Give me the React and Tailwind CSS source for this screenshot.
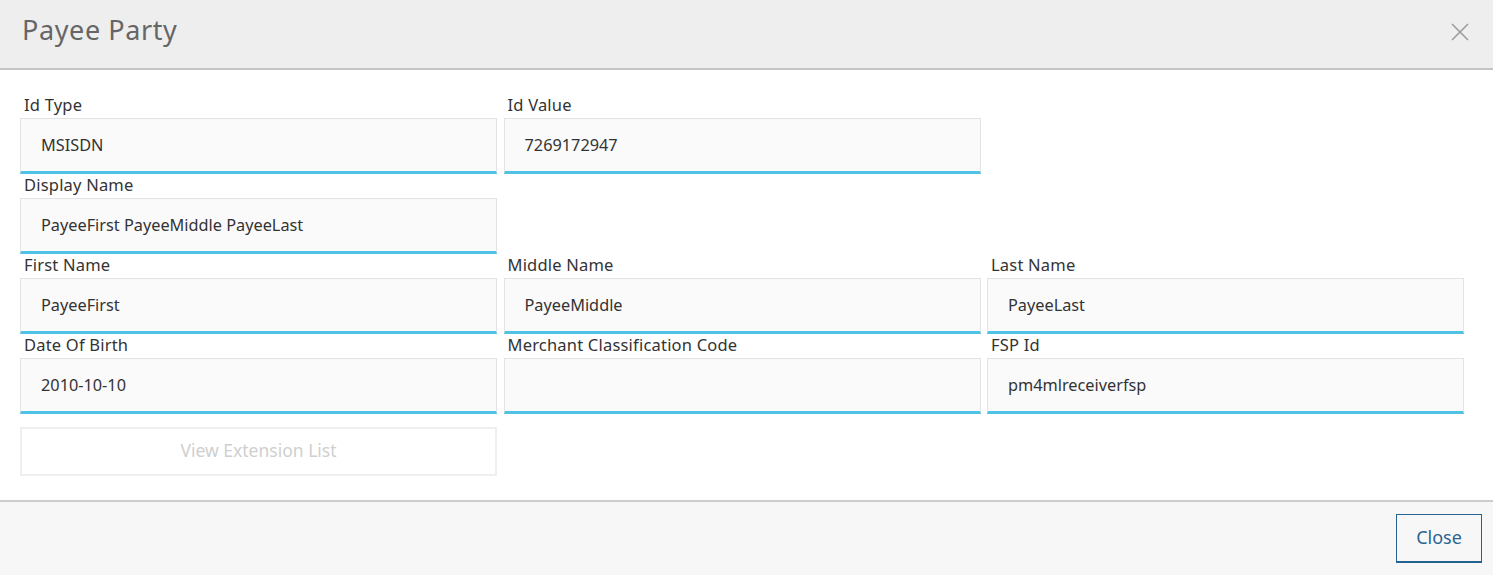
export default function App() {
  const rows = [
    [
      { label: "Id Type", value: "MSISDN" },
      { label: "Id Value", value: "7269172947" },
      null,
    ],
    [{ label: "Display Name", value: "PayeeFirst PayeeMiddle PayeeLast" }, null, null],
    [
      { label: "First Name", value: "PayeeFirst" },
      { label: "Middle Name", value: "PayeeMiddle" },
      { label: "Last Name", value: "PayeeLast" },
    ],
    [
      { label: "Date Of Birth", value: "2010-10-10" },
      { label: "Merchant Classification Code", value: "" },
      { label: "FSP Id", value: "pm4mlreceiverfsp" },
    ],
  ]

  return (
    <div
      className="w-[1493px] h-[575px] flex flex-col bg-white text-[#333]"
      style={{ fontFamily: '"Noto Sans", "Open Sans", sans-serif' }}
    >
      {/* header */}
      <div className="h-[70px] shrink-0 flex items-center justify-between bg-[#eeeeee] border-b-2 border-[#c4c4c4] pl-[22px] pr-[24px]">
        <h1 className="text-[27px] tracking-[0.6px] text-[#666] pb-[8px]">Payee Party</h1>
        <svg width="18" height="18" viewBox="0 0 18 18" className="mb-[4px]">
          <path d="M1 1 L17 17 M17 1 L1 17" stroke="#999" strokeWidth="1.5" />
        </svg>
      </div>

      {/* body */}
      <div className="flex-1 pt-[24px] pl-[20px]">
        <div className="grid grid-cols-[477px_477px_477px] gap-x-[6.5px]">
          {rows.map((row, i) =>
            row.map((f, j) =>
              f ? (
                <div key={`${i}-${j}`} className="flex flex-col">
                  <label className="h-[24px] pl-[4px] text-[16.5px] leading-[21px] tracking-[0.2px] text-[#333]">{f.label}</label>
                  <div className="h-[56px] flex items-center pl-[20px] bg-[#fafafa] border border-[#e3e3e3] border-b-[3px] border-b-[#4fc3e6] text-[16.3px] text-[#333]">
                    {f.value}
                  </div>
                </div>
              ) : (
                <div key={`${i}-${j}`} />
              )
            )
          )}
        </div>
        <button className="mt-[13px] w-[477px] h-[49px] bg-white border-2 border-[#efefef] text-[#cfcfcf] text-[17.5px] pb-[3px]">
          View Extension List
        </button>
      </div>

      {/* footer */}
      <div className="h-[75px] shrink-0 flex items-center justify-end bg-[#f7f7f7] border-t-2 border-[#cccccc] pr-[11px]">
        <button className="w-[86px] h-[49px] border border-[#24628f] border-b-2 text-[#2a6592] text-[18px] bg-transparent pb-[2px]">
          Close
        </button>
      </div>
    </div>
  )
}
